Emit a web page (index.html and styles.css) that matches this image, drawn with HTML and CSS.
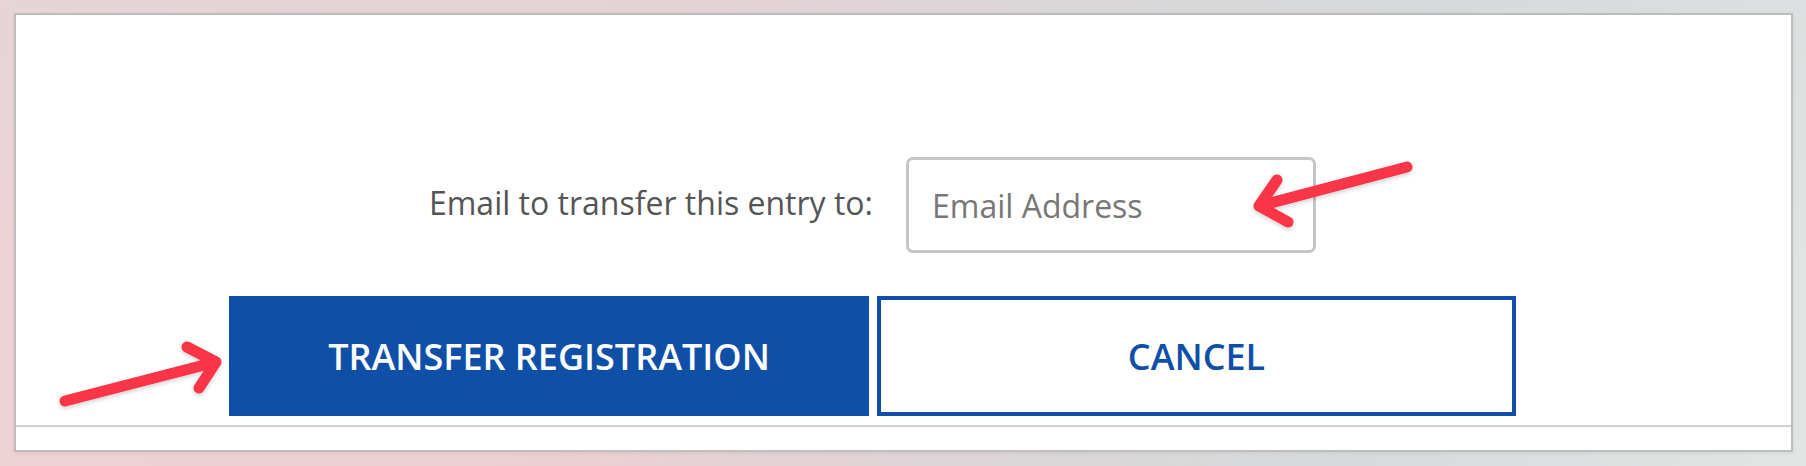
FILE: index.html
```html
<!DOCTYPE html>
<html lang="en">
<head>
  <meta charset="UTF-8">
  <meta name="viewport" content="width=device-width, initial-scale=1.0">
  <title>Transfer Registration</title>
  <link rel="stylesheet" href="styles.css">
</head>
<body>

  <div class="panel">
    <form class="transfer-form">
      <div class="email-row">
        <label for="transferEmail">Email to transfer this entry to:</label>
        <input type="text" id="transferEmail" placeholder="Email Address">
      </div>

      <div class="actions">
        <button type="button" class="btn btn-primary">TRANSFER REGISTRATION</button>
        <button type="button" class="btn btn-outline">CANCEL</button>
      </div>
    </form>
    <div class="panel-footer"></div>
  </div>

  <!-- annotation arrows drawn over the screenshot -->
  <svg class="arrows" width="1806" height="466" viewBox="0 0 1806 466">
    <defs>
      <filter id="arrowShadow" x="-20%" y="-20%" width="140%" height="140%">
        <feDropShadow dx="0" dy="2" stdDeviation="2" flood-color="#000" flood-opacity="0.18"/>
      </filter>
    </defs>
    <g fill="none" stroke="#fa3446" stroke-width="11" stroke-linecap="round" stroke-linejoin="round" filter="url(#arrowShadow)">
      <path d="M65 401 L216 362 M187 347 L216 362 L199 388"/>
      <path d="M1407 167 L1259 206 M1277 180 L1259 206 L1288 222"/>
    </g>
  </svg>

</body>
</html>
```

FILE: styles.css
```css
body {
  margin: 0;
  height: 466px;
  overflow: hidden;
  font-family: "Open Sans", "Liberation Sans", sans-serif;
  background:
    linear-gradient(180deg, rgba(214, 216, 218, 0.35) 0%, rgba(255, 255, 255, 0) 60%),
    linear-gradient(100deg, #efd2d6 0%, #eccfd3 35%, #dcd5d7 55%, #d6dadb 75%, #e1e5e4 100%);
  padding: 13px 13px 0 14px;
  box-sizing: border-box;
}

.panel {
  background: #ffffff;
  border: 2px solid #bdbdbd;
  box-shadow: 0 1px 3px rgba(0,0,0,0.08);
}

.transfer-form {
  margin-left: 213px;
  padding-top: 142px;
  width: 1287px;
}

.email-row {
  display: grid;
  grid-template-columns: 640px 639px;
  column-gap: 8px;
  align-items: center;
}

.email-row label {
  text-align: right;
  font-size: 32px;
  color: #555555;
  margin-top: -6px;
  margin-right: -4px;
}

.email-row input {
  margin-left: 29px;
  width: 410px;
  height: 96px;
  box-sizing: border-box;
  border: 3px solid #c6c6c6;
  border-radius: 7px;
  padding: 0 0 0 23px;
  font-family: inherit;
  font-size: 32px;
  color: #333;
  outline: none;
}

.email-row input::placeholder {
  color: #777777;
}

.actions {
  display: grid;
  grid-template-columns: 640px 639px;
  column-gap: 8px;
  margin-top: 43px;
}

.btn {
  height: 120px;
  font-family: inherit;
  font-size: 36px;
  font-weight: 600;
  cursor: pointer;
  box-sizing: border-box;
  padding: 0;
}

.btn-primary {
  background-color: #0f4fa8;
  color: #ffffff;
  border: none;
}

.btn-outline {
  background-color: #ffffff;
  color: #0f4fa8;
  border: 4px solid #0f4fa8;
}

.panel-footer {
  margin-top: 9px;
  border-top: 2px solid #d0d0d0;
  height: 23px;
}

.arrows {
  position: absolute;
  left: 0;
  top: 0;
  pointer-events: none;
}
```
